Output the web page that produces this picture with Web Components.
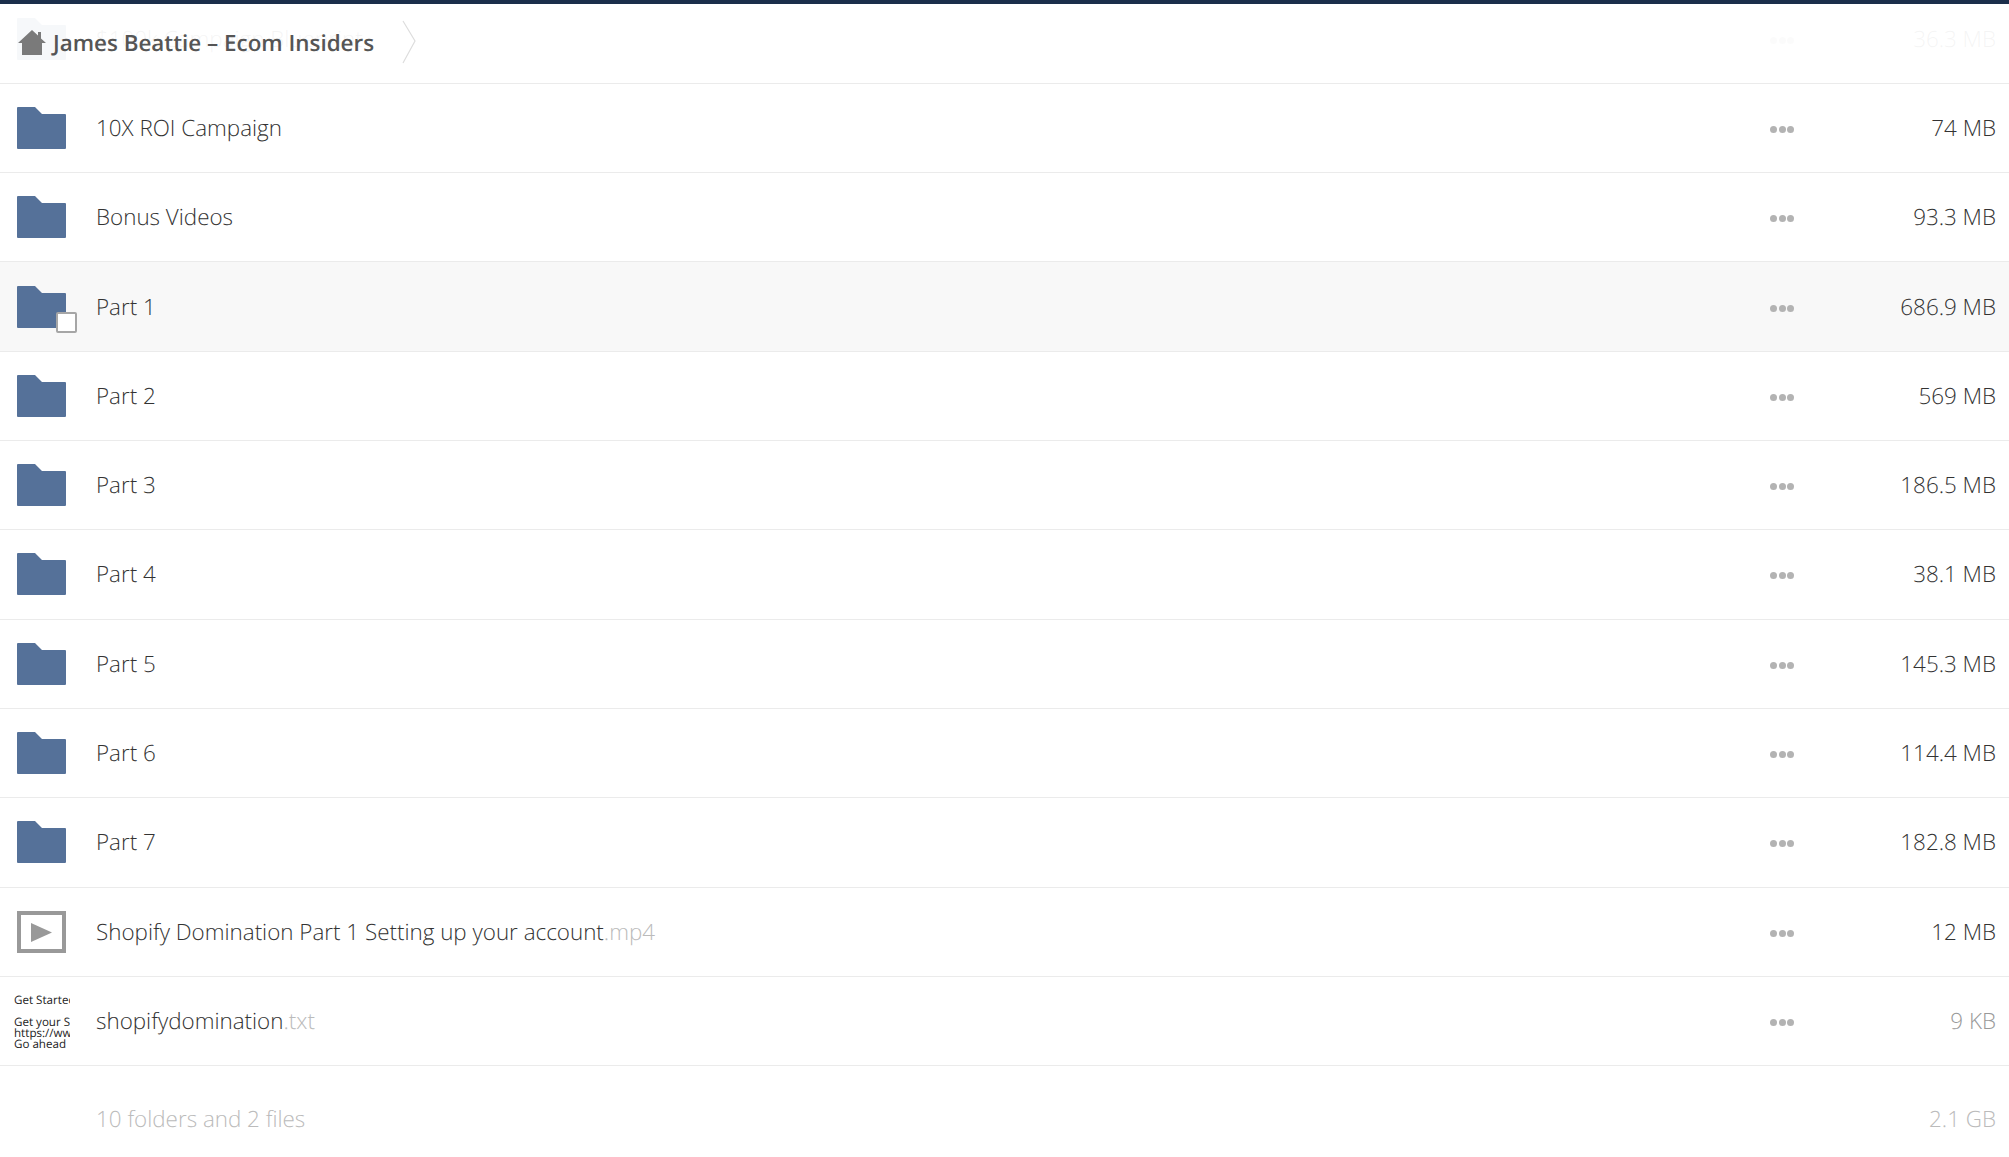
<!DOCTYPE html>
<html>
<head>
<meta charset="utf-8">
<title>James Beattie – Ecom Insiders</title>
<style>
  html, body { margin: 0; padding: 0; background: #fff; }
  body { font-family: "Open Sans", sans-serif; overflow: hidden; height: 1157px; text-rendering: geometricPrecision; }
</style>
</head>
<body>
<file-list></file-list>

<template id="row-tpl">
  <style>
    :host { display: block; }
    .row {
      display: flex;
      align-items: center;
      height: 89.3px;
      box-sizing: border-box;
      border-bottom: 1px solid #ebebeb;
      font: 300 22.4px "Open Sans", sans-serif;
      color: #333;
      padding-right: 13px;
    }
    :host([hover]) .row { background: #f8f8f8; }
    :host([plain]) .row { border-bottom: 0; color: #bbb; padding-top: 17px; }
    .thumb { position: relative; width: 96px; height: 56px; flex: none; display: flex; align-items: center; }
    .thumb svg { display: block; margin-left: 17.4px; }
    .check {
      display: none;
      position: absolute;
      left: 56px; top: 33px;
      width: 17px; height: 17px;
      background: #fff;
      border: 2px solid #a6a6a6;
      border-radius: 2px;
    }
    :host([hover]) .check { display: block; }
    .name { flex: 1; white-space: nowrap; margin-top: -1px; }
    .ext { color: #bbb; }
    .dots { display: flex; gap: 1.500px; margin-right: 72px; padding-top: 3px; }
    .dots i { width: 7px; height: 7px; border-radius: 50%; background: #b3b3b3; }
    :host([plain]) .dots { visibility: hidden; }
    .size { width: 130px; text-align: right; white-space: nowrap; margin-top: -1px; }
    :host([pale]) .size { color: #999; }
    .note {
      width: 56px; margin-left: 14px; margin-top: 3px; overflow: hidden;
      font: 400 11.6px/11px "Open Sans", sans-serif; color: #222; white-space: nowrap;
    }
    .note div:first-child { margin-bottom: 11px; }
  </style>
  <div class="row">
    <div class="thumb" id="thumb"><span class="check"></span></div>
    <div class="name"><span id="name"></span><span class="ext" id="ext"></span></div>
    <div class="dots"><i></i><i></i><i></i></div>
    <div class="size" id="size"></div>
  </div>
</template>

<script>
const icons = {
  folder: `<svg width="49" height="42" viewBox="0 0 49 42"><path fill="#557199" d="M1 0h17l7 7h23a1 1 0 0 1 1 1v33a1 1 0 0 1-1 1H1a1 1 0 0 1-1-1V1a1 1 0 0 1 1-1z"/></svg>`,
  video: `<svg width="49" height="42" viewBox="0 0 49 42"><rect x="2" y="2" width="45" height="38" fill="#fff" stroke="#999" stroke-width="4"/><path fill="#999" d="M14 12v19l21-9.500z"/></svg>`,
  note: `<div class="note"><div>Get Started</div><div>Get your Shopify</div><div>https://www.shopify</div><div>Go ahead</div></div>`
};

class FileRow extends HTMLElement {
  connectedCallback() {
    const root = this.attachShadow({ mode: 'open' });
    root.appendChild(document.getElementById('row-tpl').content.cloneNode(true));
    const kind = this.getAttribute('kind');
    if (kind) root.getElementById('thumb').insertAdjacentHTML('afterbegin', icons[kind]);
    root.getElementById('name').textContent = this.getAttribute('name');
    root.getElementById('ext').textContent = this.getAttribute('ext') || '';
    root.getElementById('size').textContent = this.getAttribute('size');
  }
}
customElements.define('file-row', FileRow);

class CrumbBar extends HTMLElement {
  connectedCallback() {
    this.attachShadow({ mode: 'open' }).innerHTML = `
      <style>
        :host {
          position: absolute; left: 0; right: 0; top: 0; height: 76px; padding-bottom: 3px;
          display: flex; align-items: center;
          background: rgba(255,255,255,.95);
          font: 600 22.4px "Open Sans", sans-serif; color: #555;
        }
        .home { margin-left: 18px; margin-right: 7px; display: block; }
        .label { white-space: nowrap; }
        .arrow { margin-left: 28px; display: block; }
      </style>
      <svg class="home" width="28" height="25" viewBox="0 0 28 25"><path fill="#7a7a7a" d="M14 0l6 5.500V2h3v6.500L28 13h-4v12H4V13H0z"/></svg>
      <span class="label"><slot></slot></span>
      <svg class="arrow" width="14" height="44" viewBox="0 0 14 44"><path fill="none" stroke="#ddd" stroke-width="1.200" d="M1 1l12 20L1 43"/></svg>`;
  }
}
customElements.define('crumb-bar', CrumbBar);

class FileList extends HTMLElement {
  connectedCallback() {
    this.attachShadow({ mode: 'open' }).innerHTML = `
      <style>
        :host { display: block; position: relative; border-top: 4px solid #1b2e4b; }
        .rows { margin-top: -9.45px; }
      </style>
      <div class="rows"><slot></slot></div>
      <crumb-bar>James Beattie – Ecom Insiders</crumb-bar>`;
    const rows = [
      ['folder', '$100k Campaign Blueprint', '', '36.3 MB'],
      ['folder', '10X ROI Campaign', '', '74 MB'],
      ['folder', 'Bonus Videos', '', '93.3 MB'],
      ['folder', 'Part 1', '', '686.9 MB', 'hover'],
      ['folder', 'Part 2', '', '569 MB'],
      ['folder', 'Part 3', '', '186.5 MB'],
      ['folder', 'Part 4', '', '38.1 MB'],
      ['folder', 'Part 5', '', '145.3 MB'],
      ['folder', 'Part 6', '', '114.4 MB'],
      ['folder', 'Part 7', '', '182.8 MB'],
      ['video', 'Shopify Domination Part 1 Setting up your account', '.mp4', '12 MB'],
      ['note', 'shopifydomination', '.txt', '9 KB', 'pale'],
      ['', '10 folders and 2 files', '', '2.1 GB', 'plain']
    ];
    for (const [kind, name, ext, size, flag] of rows) {
      const r = document.createElement('file-row');
      r.setAttribute('kind', kind);
      r.setAttribute('name', name);
      r.setAttribute('ext', ext);
      r.setAttribute('size', size);
      if (flag) r.setAttribute(flag, '');
      this.appendChild(r);
    }
  }
}
customElements.define('file-list', FileList);
</script>
</body>
</html>
